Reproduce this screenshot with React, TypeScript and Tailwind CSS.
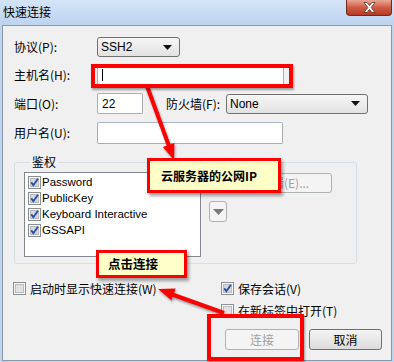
import React from "react";

const cjk = { fontFamily: '"Noto Sans CJK SC", "Liberation Sans", sans-serif' };
const latin = { fontFamily: '"Liberation Sans", "Noto Sans CJK SC", sans-serif' };

function Check({ checked }: { checked?: boolean }) {
  return (
    <svg width="13" height="13" viewBox="0 0 13 13" className="shrink-0">
      <rect x="0.5" y="0.5" width="12" height="12" fill="#f6f6f6" stroke="#8e8f8f" />
      <rect x="2.5" y="2.5" width="8" height="8" fill={checked ? "#d4d8df" : "#e2e2e2"} stroke="#b9bcc2" />
      {checked && <path d="M3.2 6.4 L5.4 9.2 L9.9 2.8" fill="none" stroke="#2f4ea3" strokeWidth="1.9" />}
    </svg>
  );
}

function Caret() {
  return (
    <svg width="9" height="5" viewBox="0 0 9 5">
      <path d="M0 0 H9 L4.5 5 Z" fill="#111" />
    </svg>
  );
}

function Select({ value, className }: { value: string; className: string }) {
  return (
    <div
      className={`flex items-center justify-between h-[20px] border border-[#707070] rounded-[3px] bg-gradient-to-b from-[#f6f6f6] to-[#e2e2e2] pl-[3px] pr-[7px] text-[12px] ${className}`}
      style={latin}
    >
      <span>{value}</span>
      <Caret />
    </div>
  );
}

function Input({ className, children }: { className: string; children?: React.ReactNode }) {
  return (
    <div
      className={`flex items-center bg-white border border-[#abadb3] border-t-[#a6b5c8] rounded-[2px] pl-[4px] text-[12px] ${className}`}
      style={latin}
    >
      {children}
    </div>
  );
}

function Label({ children, className = "" }: { children: React.ReactNode; className?: string }) {
  return (
    <span className={`text-[12px] leading-none text-black ${className}`} style={cjk}>
      {children}
    </span>
  );
}

export default function App() {
  return (
    <div className="relative w-[394px] h-[362px] overflow-hidden bg-[#bfd5ee]">
      {/* title bar */}
      <div className="flex justify-between h-[25px] bg-gradient-to-b from-[#d4e5f8] to-[#bdd4ee]">
        <span className="pl-[3px] pt-[4px] text-[12px] leading-[16px] text-black" style={cjk}>
          快速连接
        </span>
        <div className="mr-[2px] w-[46px] h-[16px] rounded-b-[4px] border border-t-0 border-[#6e2a20] bg-gradient-to-b from-[#e8a796] via-[#cf5a43] to-[#b73a22] flex items-center justify-center">
          <svg width="13" height="11" viewBox="0 0 13 11">
            <path d="M1 0.5 H4 L6.5 3.5 L9 0.5 H12 L8.2 5.5 L12 10.5 H9 L6.5 7.5 L4 10.5 H1 L4.8 5.5 Z" fill="#fff" stroke="#5b2a22" strokeWidth="0.8" />
          </svg>
        </div>
      </div>

      {/* dialog body */}
      <div className="mx-[2px] h-[336px] border border-[#8d99a6] bg-[#f0f0f0] pl-[11px] pt-[11px]">
        <div className="flex items-center h-[20px]">
          <Label className="w-[83px]">协议(P):</Label>
          <Select value="SSH2" className="w-[83px]" />
        </div>

        <div className="flex items-center h-[21px] mt-[7px]">
          <Label className="w-[83px]">主机名(H):</Label>
          <Input className="w-[187px] h-[21px]">
            <span className="w-px h-[12px] bg-black" />
          </Input>
        </div>

        <div className="flex items-center h-[21px] mt-[8px]">
          <Label className="w-[83px]">端口(O):</Label>
          <Input className="w-[46px] h-[21px]">22</Input>
          <Label className="ml-[23px] w-[60px]">防火墙(F):</Label>
          <Select value="None" className="w-[142px]" />
        </div>

        <div className="flex items-center h-[22px] mt-[8px]">
          <Label className="w-[83px]">用户名(U):</Label>
          <Input className="w-[186px] h-[22px]" />
        </div>

        <fieldset className="mt-[10px] w-[343px] h-[110px] border border-[#d5dfe5] rounded-[3px] pl-[9px]">
          <legend className="ml-[6px] px-[2px] text-[12px] leading-[16px]" style={cjk}>
            鉴权
          </legend>
          <div className="flex mt-[2px]">
            <div className="w-[177px] h-[85px] bg-white border border-[#828790] pt-[3px] pl-[3px] flex flex-col gap-[3px]">
              {["Password", "PublicKey", "Keyboard Interactive", "GSSAPI"].map((t) => (
                <div key={t} className="flex items-center gap-[1px] h-[13px]">
                  <Check checked />
                  <span className="text-[11.5px] leading-none text-[#000] pt-[1px]" style={latin}>
                    {t}
                  </span>
                </div>
              ))}
            </div>
            <div className="flex flex-col ml-[8px] mt-[1px]">
              <div className="w-[123px] h-[20px] border border-[#adb2b5] rounded-[3px] bg-[#f4f4f4] flex items-center pl-[50px] text-[12px] text-[#a0a0a0]" style={cjk}>
                编辑(E)...
              </div>
              <div className="mt-[8px] w-[18px] h-[21px] border border-[#adb2b5] rounded-[3px] bg-[#f4f4f4] flex items-center justify-center">
                <svg width="11" height="6" viewBox="0 0 11 6">
                  <path d="M0 0 H11 L5.5 6 Z" fill="#7a7a7a" />
                </svg>
              </div>
            </div>
          </div>
        </fieldset>

        <div className="flex items-center h-[13px] mt-[18px] -ml-[1px]">
          <div className="flex items-center gap-[4px] w-[208px]">
            <Check />
            <Label>启动时显示快速连接(W)</Label>
          </div>
          <Check checked />
          <Label className="ml-[4px]">保存会话(V)</Label>
        </div>

        <div className="flex items-center h-[13px] mt-[9px] ml-[207px]">
          <Check />
          <Label className="ml-[4px]">在新标签中打开(T)</Label>
        </div>

        <div className="flex mt-[12px] ml-[211px] gap-[10px]">
          <div className="w-[74px] h-[21px] border border-[#adb2b5] rounded-[3px] bg-[#f4f4f4] flex items-center justify-center text-[12px] text-[#a0a0a0]" style={cjk}>
            连接
          </div>
          <div className="w-[73px] h-[21px] border border-[#707070] rounded-[3px] bg-gradient-to-b from-[#f4f4f4] to-[#dcdcdc] flex items-center justify-center text-[12px] text-black" style={cjk}>
            取消
          </div>
        </div>
      </div>

      {/* annotation overlays */}
      <svg className="absolute left-0 top-0 pointer-events-none drop-shadow-[1px_2px_1px_rgba(0,0,0,0.35)]" width="394" height="362" viewBox="0 0 394 362">
        <line x1="147" y1="86" x2="169" y2="146" stroke="#ff0000" strokeWidth="4" />
        <polygon points="174,160 162.8,147.1 174.4,142.9" fill="#ff0000" />
        <line x1="224" y1="313" x2="171" y2="294" stroke="#ff0000" strokeWidth="4" />
        <polygon points="158,289 175.6,288.6 171.4,300.3" fill="#ff0000" />
      </svg>

      <div className="absolute left-[91px] top-[64px] w-[202px] h-[24px] border-[4px] border-[#ff0000] shadow-[1px_2px_2px_rgba(0,0,0,0.35)]" />
      <div className="absolute left-[207px] top-[314px] w-[97px] h-[47px] border-[4px] border-[#ff0000] shadow-[1px_2px_2px_rgba(0,0,0,0.35)]" />

      <div className="absolute left-[147px] top-[158px] w-[134px] h-[35px] border-[3px] border-[#ff0000] bg-[#ffffc8] shadow-[2px_3px_3px_rgba(0,0,0,0.35)] flex items-center pl-[11px]">
        <span className="text-[12px] font-bold leading-none text-black" style={cjk}>
          云服务器的公网IP
        </span>
      </div>
      <div className="absolute left-[96px] top-[250px] w-[91px] h-[28px] border-[3px] border-[#ff0000] bg-[#ffffc8] shadow-[2px_3px_3px_rgba(0,0,0,0.35)] flex items-center pl-[9px]">
        <span className="text-[12.5px] font-bold leading-none text-black" style={cjk}>
          点击连接
        </span>
      </div>
    </div>
  );
}
